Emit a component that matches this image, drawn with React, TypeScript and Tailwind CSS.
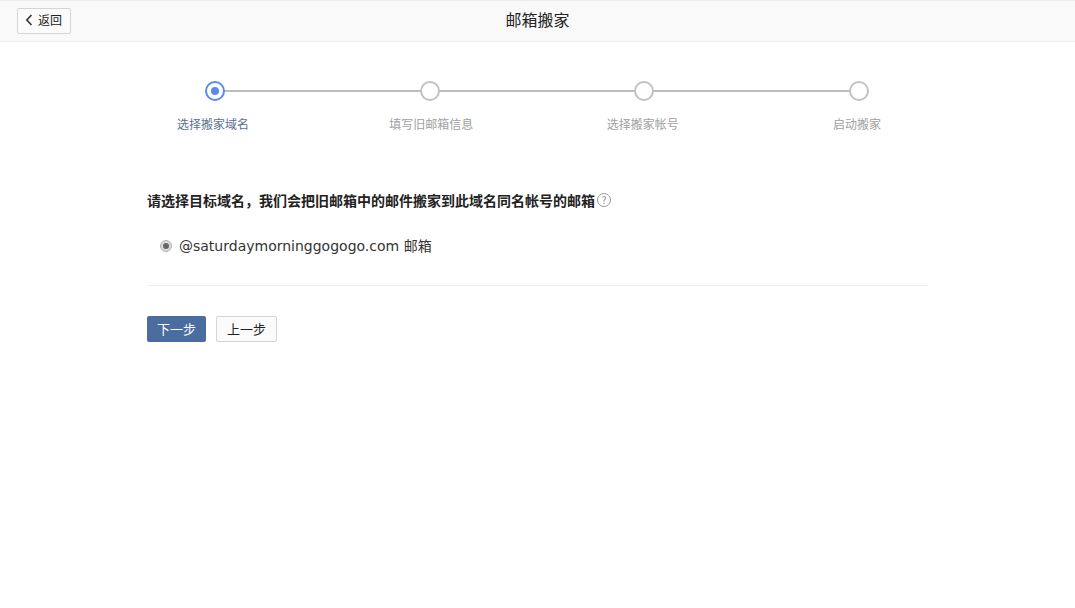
import React from 'react';

const FONT = '"Noto Sans CJK SC", sans-serif';
const LATIN = '"DejaVu Sans", "Noto Sans CJK SC", sans-serif';

const STEPS = [
  { label: '选择搬家域名', nudge: '-ml-[4px]' },
  { label: '填写旧邮箱信息', nudge: 'ml-[3px]' },
  { label: '选择搬家帐号', nudge: '-ml-[3px]' },
  { label: '启动搬家', nudge: '-ml-[4px]' },
];

function StepDot({ active }: { active: boolean }) {
  if (active) {
    return (
      <span className="flex h-5 w-5 items-center justify-center rounded-full border-2 border-[#5b8bea] bg-white">
        <span className="h-2 w-2 rounded-full bg-[#5b8bea]" />
      </span>
    );
  }
  return <span className="h-5 w-5 rounded-full border-2 border-[#c2c2c2] bg-white" />;
}

export default function App() {
  return (
    <div className="min-h-[608px] bg-white text-[#222]" style={{ fontFamily: FONT }}>
      <header className="relative flex h-[42px] items-center justify-center border-y border-[#ececec] bg-[#f9f9f9]">
        <button className="absolute left-[17px] top-[7px] flex h-[26px] w-[54px] items-center justify-center gap-[5px] rounded-[2px] border border-[#d5d5d5] bg-[#fbfbfb] pb-[2px] pr-[1px] text-xs text-[#222]">
          <svg width="8" height="12" viewBox="0 0 8 12" fill="none" stroke="#333" strokeWidth="1.6">
            <path d="M6.5 1 L1.8 6 L6.5 11" />
          </svg>
          返回
        </button>
        <h1 className="mb-[4px] text-[16px] font-normal text-[#222]">邮箱搬家</h1>
      </header>

      <main className="ml-[147px] w-[781px]">
        <div className="relative ml-[18px] mt-[39px] w-[744px]">
          <div className="absolute left-[50px] right-[50px] top-[9px] h-[2px] bg-[#bdbdbd]" />
          <ol className="relative flex justify-between">
            {STEPS.map(({ label, nudge }, i) => (
              <li key={label} className="flex w-[100px] flex-col items-center">
                <StepDot active={i === 0} />
                <span className={`mt-[13px] whitespace-nowrap text-xs leading-[20px] ${nudge} ${i === 0 ? 'text-[#5a7194]' : 'text-[#a0a0a0]'}`}>
                  {label}
                </span>
              </li>
            ))}
          </ol>
        </div>

        <p className="mt-[56px] flex h-5 items-center text-[14px] font-bold text-[#222]">
          请选择目标域名，我们会把旧邮箱中的邮件搬家到此域名同名帐号的邮箱
          <span className="ml-[2px] flex h-[14px] w-[14px] items-center justify-center rounded-full border border-[#999] text-[10px] font-normal leading-none text-[#888]">
            ?
          </span>
        </p>

        <label className="mt-[26px] flex h-5 items-center pl-[13px] text-[14px] text-[#333]">
          <span className="flex h-3 w-3 items-center justify-center rounded-full border border-[#b0b0b0] bg-[#dcdcdc]">
            <span className="h-[6px] w-[6px] rounded-full bg-[#666]" />
          </span>
          <span className="ml-[7px]" style={{ fontFamily: LATIN }}>
            @saturdaymorninggogogo.com 邮箱
          </span>
        </label>

        <div className="mt-[29px] h-px bg-[#eeeeee]" />

        <div className="mt-[30px] flex gap-[10px]">
          <button className="h-[26px] w-[59px] rounded-[2px] bg-[#4a6c9f] text-[13px] text-white">下一步</button>
          <button className="h-[26px] w-[61px] rounded-[2px] border border-[#d5d5d5] bg-[#fbfbfb] text-[13px] text-[#222]">上一步</button>
        </div>
      </main>
    </div>
  );
}
